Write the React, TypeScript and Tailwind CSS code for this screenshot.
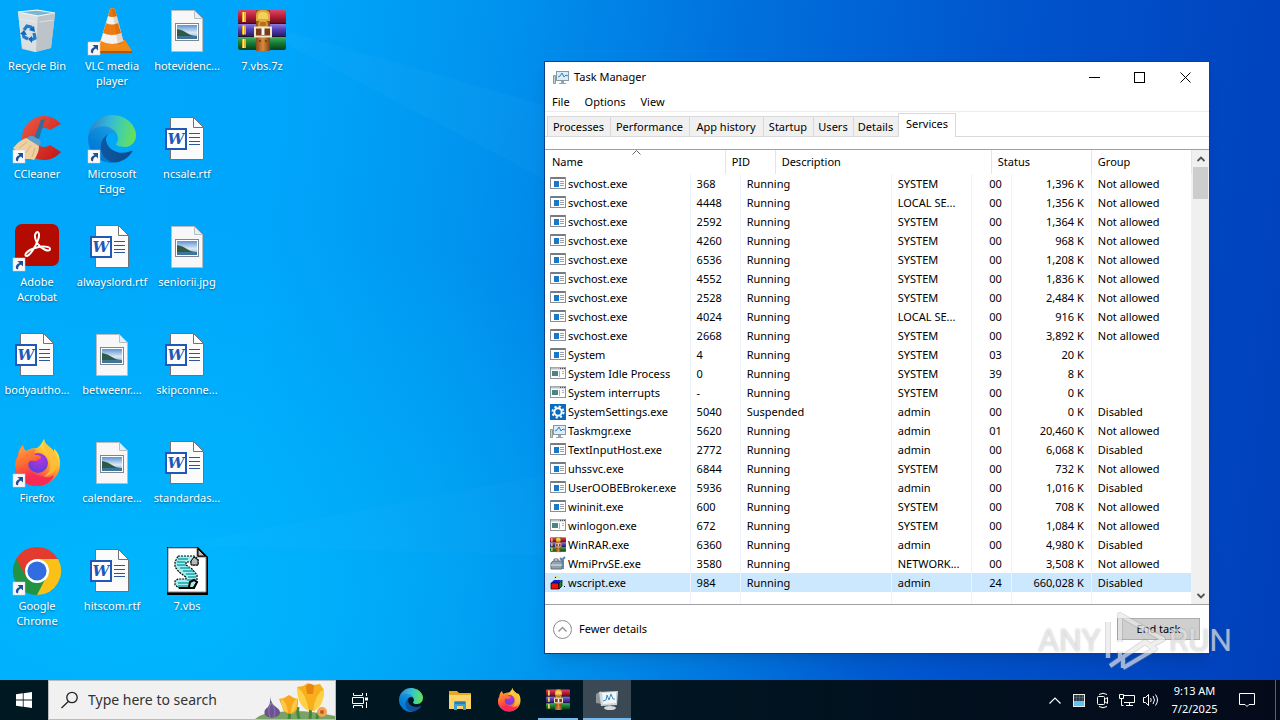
import React from 'react';

type Kind = 'bin' | 'vlc' | 'image' | 'rar' | 'ccleaner' | 'edge' | 'word' | 'acrobat' | 'firefox' | 'chrome' | 'vbs';

const shortcuts: { name: string; icon: Kind; link?: boolean; cell: string }[] = [
  { name: 'Recycle Bin', icon: 'bin', cell: 'col-start-1 row-start-1' },
  { name: 'CCleaner', icon: 'ccleaner', link: true, cell: 'col-start-1 row-start-2' },
  { name: 'Adobe\nAcrobat', icon: 'acrobat', link: true, cell: 'col-start-1 row-start-3' },
  { name: 'bodyautho...', icon: 'word', cell: 'col-start-1 row-start-4' },
  { name: 'Firefox', icon: 'firefox', link: true, cell: 'col-start-1 row-start-5' },
  { name: 'Google\nChrome', icon: 'chrome', link: true, cell: 'col-start-1 row-start-6' },
  { name: 'VLC media\nplayer', icon: 'vlc', link: true, cell: 'col-start-2 row-start-1' },
  { name: 'Microsoft\nEdge', icon: 'edge', link: true, cell: 'col-start-2 row-start-2' },
  { name: 'alwayslord.rtf', icon: 'word', cell: 'col-start-2 row-start-3' },
  { name: 'betweenr....', icon: 'image', cell: 'col-start-2 row-start-4' },
  { name: 'calendare...', icon: 'image', cell: 'col-start-2 row-start-5' },
  { name: 'hitscom.rtf', icon: 'word', cell: 'col-start-2 row-start-6' },
  { name: 'hotevidenc...', icon: 'image', cell: 'col-start-3 row-start-1' },
  { name: 'ncsale.rtf', icon: 'word', cell: 'col-start-3 row-start-2' },
  { name: 'seniorii.jpg', icon: 'image', cell: 'col-start-3 row-start-3' },
  { name: 'skipconne...', icon: 'word', cell: 'col-start-3 row-start-4' },
  { name: 'standardas...', icon: 'word', cell: 'col-start-3 row-start-5' },
  { name: '7.vbs', icon: 'vbs', cell: 'col-start-3 row-start-6' },
  { name: '7.vbs.7z', icon: 'rar', cell: 'col-start-4 row-start-1' },
];

const tabs = [
  { name: 'Processes', width: 'w-[63px]' },
  { name: 'Performance', width: 'w-[79px]' },
  { name: 'App history', width: 'w-[74px]' },
  { name: 'Startup', width: 'w-[50px]' },
  { name: 'Users', width: 'w-[40px]' },
  { name: 'Details', width: 'w-[45px]' },
];

// icon, name, pid, state, user, cpu, memory, virtualization
const rows = [
  ['exe', 'svchost.exe', '368', 'Running', 'SYSTEM', '00', '1,396 K', 'Not allowed'],
  ['exe', 'svchost.exe', '4448', 'Running', 'LOCAL SE...', '00', '1,356 K', 'Not allowed'],
  ['exe', 'svchost.exe', '2592', 'Running', 'SYSTEM', '00', '1,364 K', 'Not allowed'],
  ['exe', 'svchost.exe', '4260', 'Running', 'SYSTEM', '00', '968 K', 'Not allowed'],
  ['exe', 'svchost.exe', '6536', 'Running', 'SYSTEM', '00', '1,208 K', 'Not allowed'],
  ['exe', 'svchost.exe', '4552', 'Running', 'SYSTEM', '00', '1,836 K', 'Not allowed'],
  ['exe', 'svchost.exe', '2528', 'Running', 'SYSTEM', '00', '2,484 K', 'Not allowed'],
  ['exe', 'svchost.exe', '4024', 'Running', 'LOCAL SE...', '00', '916 K', 'Not allowed'],
  ['exe', 'svchost.exe', '2668', 'Running', 'SYSTEM', '00', '3,892 K', 'Not allowed'],
  ['exe', 'System', '4', 'Running', 'SYSTEM', '03', '20 K', ''],
  ['sys', 'System Idle Process', '0', 'Running', 'SYSTEM', '39', '8 K', ''],
  ['sys', 'System interrupts', '-', 'Running', 'SYSTEM', '00', '0 K', ''],
  ['gear', 'SystemSettings.exe', '5040', 'Suspended', 'admin', '00', '0 K', 'Disabled'],
  ['taskmgr', 'Taskmgr.exe', '5620', 'Running', 'admin', '01', '20,460 K', 'Not allowed'],
  ['exe', 'TextInputHost.exe', '2772', 'Running', 'admin', '00', '6,068 K', 'Disabled'],
  ['exe', 'uhssvc.exe', '6844', 'Running', 'SYSTEM', '00', '732 K', 'Not allowed'],
  ['exe', 'UserOOBEBroker.exe', '5936', 'Running', 'admin', '00', '1,016 K', 'Disabled'],
  ['exe', 'wininit.exe', '600', 'Running', 'SYSTEM', '00', '708 K', 'Not allowed'],
  ['sys', 'winlogon.exe', '672', 'Running', 'SYSTEM', '00', '1,084 K', 'Not allowed'],
  ['rar', 'WinRAR.exe', '6360', 'Running', 'admin', '00', '4,980 K', 'Disabled'],
  ['wmi', 'WmiPrvSE.exe', '3580', 'Running', 'NETWORK...', '00', '3,508 K', 'Not allowed'],
  ['wscript', 'wscript.exe', '984', 'Running', 'admin', '24', '660,028 K', 'Disabled'],
];

const EdgeArt = () => (
  <g transform="scale(0.1875) translate(-4.63 -4.92)">
    <defs>
      <linearGradient id="edge-a" x1="63" y1="177" x2="241" y2="177" gradientUnits="userSpaceOnUse">
        <stop offset="0" stopColor="#0c59a4" />
        <stop offset="1" stopColor="#114a8b" />
      </linearGradient>
      <linearGradient id="edge-b" x1="157" y1="95" x2="46" y2="227" gradientUnits="userSpaceOnUse">
        <stop offset="0" stopColor="#1b9de2" />
        <stop offset="0.16" stopColor="#1595df" />
        <stop offset="0.67" stopColor="#0680d7" />
        <stop offset="1" stopColor="#0078d4" />
      </linearGradient>
      <linearGradient id="edge-c" x1="20" y1="70" x2="250" y2="120" gradientUnits="userSpaceOnUse">
        <stop offset="0" stopColor="#2f86c8" />
        <stop offset="0.35" stopColor="#36b4d8" />
        <stop offset="0.65" stopColor="#42d0a8" />
        <stop offset="1" stopColor="#66e05a" />
      </linearGradient>
    </defs>
    <path fill="url(#edge-a)" d="M235.68 195.46a93.73 93.73 0 01-10.54 4.71 101.87 101.87 0 01-35.9 6.46c-47.32 0-88.54-32.55-88.54-74.32A31.48 31.48 0 01117.13 104.53c-42.8 1.8-53.8 46.4-53.8 72.53 0 73.88 68.09 81.37 82.76 81.37 7.91 0 19.84-2.3 27-4.56l1.31-.44A128.34 128.34 0 00241 201.1a4 4 0 00-5.32-5.64z" />
    <path fill="url(#edge-b)" d="M110.34 246.34A79.2 79.2 0 0187.6 225a80.72 80.72 0 0129.53-120.47c3.12-1.47 8.45-4.13 15.54-4a32.35 32.35 0 0125.69 13 31.88 31.88 0 016.36 18.66c0-.21 24.46-79.6-80-79.6-43.9 0-80 41.66-80 78.21a130.15 130.15 0 0012.11 56 128 128 0 00156.38 67.11 75.55 75.55 0 01-62.78-8z" />
    <path fill="url(#edge-c)" d="M156.94 153.78c-.81 1.05-3.3 2.5-3.3 5.66 0 2.61 1.7 5.12 4.72 7.23 14.38 10 41.49 8.68 41.56 8.68a59.56 59.56 0 0030.27-8.35A61.38 61.38 0 00260.63 114.09c.26-22.41-8-37.31-11.34-43.91C228.09 28.75 182.35 4.92 132.63 4.92a128 128 0 00-128 126.2c.48-36.54 36.8-66.05 80-66.05 3.5 0 23.46.34 42 10.07 16.34 8.58 24.9 18.94 30.85 29.21 6.18 10.67 7.28 24.15 7.28 29.52s-2.74 13.33-7.82 19.91z" />
  </g>
);

const FirefoxArt = () => (
  <g>
    <defs>
      <linearGradient id="ff-a" x1="40" y1="6" x2="10" y2="42" gradientUnits="userSpaceOnUse">
        <stop offset="0" stopColor="#fff44f" />
        <stop offset="0.3" stopColor="#ffb62e" />
        <stop offset="0.55" stopColor="#ff7139" />
        <stop offset="0.8" stopColor="#f5345f" />
        <stop offset="1" stopColor="#e31587" />
      </linearGradient>
      <radialGradient id="ff-b" cx="26" cy="20" r="12" gradientUnits="userSpaceOnUse">
        <stop offset="0" stopColor="#b833e1" />
        <stop offset="1" stopColor="#6a3fd9" />
      </radialGradient>
      <linearGradient id="ff-c" x1="8" y1="10" x2="20" y2="36" gradientUnits="userSpaceOnUse">
        <stop offset="0" stopColor="#ff9640" />
        <stop offset="0.5" stopColor="#ff6a30" />
        <stop offset="1" stopColor="#f72c55" />
      </linearGradient>
    </defs>
    <path fill="url(#ff-a)" d="M31 0c-2 4-4 7-7 9-5 0-8 1-11 3-2-1-3-3-3-6-3 3-5 7-5 11-2 3-3 6-3 9 0 12 10 21 22 21s23-9 23-22c0-7-2-12-6-15l0 3c-2-5-9-6-10-13z" />
    <circle cx="25" cy="24" r="10" fill="url(#ff-b)" />
    <path fill="url(#ff-c)" d="M10 6c-3 3-5 7-5 11-2 3-3 6-3 9 0 12 10 21 22 21 9 0 15-5 17-11-4 3-8 3-12 1-3 0-6-1-9-3-3-2-5-5-5-8 0-2 1-3 2-4 2-1 5 1 8-1 3-2 3-2 3-3-1-2-5-2-6-2-1-1-1-3 1-6-4 0-7 1-10 2-2-2-3-4-3-7z" />
    <path fill="#ffbd3a" d="M31 0c-3 7 3 11 5 18 3 8 1 16-5 20 9-2 13-8 14-14 0-5-1-9-4-13v3c-2-5-9-7-10-14z" opacity="0.85" />
  </g>
);

const RarArt = () => (
  <g>
    <defs>
      <linearGradient id="rar-r" x1="0" y1="0" x2="0" y2="1">
        <stop offset="0" stopColor="#d8486a" />
        <stop offset="0.4" stopColor="#c0223c" />
        <stop offset="1" stopColor="#5c0c1c" />
      </linearGradient>
      <linearGradient id="rar-b" x1="0" y1="0" x2="0" y2="1">
        <stop offset="0" stopColor="#8e7ce0" />
        <stop offset="0.4" stopColor="#5440b8" />
        <stop offset="1" stopColor="#22195c" />
      </linearGradient>
      <linearGradient id="rar-g" x1="0" y1="0" x2="0" y2="1">
        <stop offset="0" stopColor="#4cae5c" />
        <stop offset="0.4" stopColor="#17853a" />
        <stop offset="1" stopColor="#073d18" />
      </linearGradient>
      <linearGradient id="rar-s" x1="0" y1="0" x2="1" y2="0">
        <stop offset="0" stopColor="#8a4a1c" />
        <stop offset="0.5" stopColor="#d98a3c" />
        <stop offset="1" stopColor="#7d4016" />
      </linearGradient>
    </defs>
    <rect x="0" y="3" width="48" height="14" rx="2" fill="url(#rar-r)" />
    <rect x="0" y="17" width="48" height="13" rx="2" fill="url(#rar-b)" />
    <rect x="0" y="30" width="48" height="13" rx="2" fill="url(#rar-g)" />
    <path d="M0 16.500h48M0 29.500h48" stroke="#1c1430" />
    <path d="M4 5h4v10h-4zM4 18.500h4v9h-4zM4 32h4v9h-4z" fill="#e8b030" />
    <path d="M5 5h1v10h-1zM5 18.500h1v9h-1zM5 32h1v9h-1z" fill="#fff0a0" />
    <rect x="18" y="3" width="14" height="41" fill="url(#rar-s)" />
    <path d="M18 14v-6q0-5 7-5t7 5v6z" fill="#e0a63a" />
    <path d="M20 12v-3q0-4 5-4t5 4v3z" fill="#f3cf5c" />
    <path d="M21 20v-4q0-2 4-2t4 2v4z" fill="#b87020" stroke="#f0c040" />
    <path d="M17 20.500h16v9H17z" fill="#7a3c18" stroke="#f1e4c8" strokeWidth="2" />
    <path d="M25 21v7" stroke="#f7f7f7" strokeWidth="3" />
    <path d="M21 33h2v2h-2zM27 33h2v2h-2z" fill="#7a4018" />
  </g>
);

function DesktopArt({ kind }: { kind: Kind }) {
  switch (kind) {
    case 'edge':
      return <EdgeArt />;
    case 'firefox':
      return <FirefoxArt />;
    case 'rar':
      return <RarArt />;
    case 'bin':
      return (
        <g>
          <path d="M5 5l22-2 15 4-4 34-16 4-13-3z" fill="#cdd3d7" />
          <path d="M5 5l20 3-2 37-14-4z" fill="#dadfe2" />
          <path d="M25 8l17-2-4 35-15 4z" fill="#bcc4ca" />
          <path d="M5 5l19-2 18 3-17 3z" fill="#7fb6cf" stroke="#f4f8fa" strokeWidth="1.200" />
          <path d="M7 12l17 3M26 15l15-2" stroke="#eff2f3" opacity="0.600" />
          <g fill="none" stroke="#1b7ed0" strokeWidth="3.200">
            <path d="M11 23l3-4 4 1 1 3" />
            <path d="M21 26l1 5-4 2" />
            <path d="M15 32l-4-2-1-4" />
          </g>
          <path d="M21 19l1 6-6-2zM19 29v7l-4-4zM7 27l4-4 3 5z" fill="#1268b8" />
        </g>
      );
    case 'vlc':
      return (
        <g>
          <path d="M12 33h25l7 11v2H8v-2z" fill="#f08a12" />
          <path d="M8 44h36v2H8z" fill="#b85400" />
          <path d="M22 2q2-2 5 0l9 34q-11 7-24 0z" fill="#f2f2f2" />
          <path d="M22 2q2-2 5 0l2 7q-5 2-9 0z" fill="#e8760e" />
          <path d="M18 16q6 3 12 0l3 10q-9 4-18 0z" fill="#ed7a10" />
          <path d="M13 34q11 6 23 0l1 3q-12 8-25 0z" fill="#f58b1e" />
          <path d="M24 2q1-1 3 0l9 34q-3 2-6 2z" fill="#9a4a00" opacity="0.180" />
        </g>
      );
    case 'image':
      return (
        <g>
          <defs>
            <linearGradient id="img-sky" x1="0" y1="0" x2="0" y2="1">
              <stop offset="0" stopColor="#5b93d8" />
              <stop offset="0.55" stopColor="#dbe9f4" />
              <stop offset="1" stopColor="#7fa9c4" />
            </linearGradient>
          </defs>
          <path d="M8.500 3.500h23l8 8v33h-31z" fill="#f7f7f7" stroke="#b9bcc0" />
          <path d="M31.500 3.500v8h8z" fill="#dff0fa" stroke="#b9bcc0" />
          <rect x="12.500" y="16.500" width="23" height="17" fill="#fff" stroke="#7d8791" />
          <rect x="14" y="18" width="20" height="14" fill="url(#img-sky)" />
          <path d="M14 22q6 1 10 4t10 3v1H14z" fill="#2f5b46" />
          <path d="M14 29h20v3H14z" fill="#3f7598" />
        </g>
      );
    case 'ccleaner':
      return (
        <g>
          <defs>
            <linearGradient id="cc-r" x1="0" y1="0" x2="1" y2="1">
              <stop offset="0" stopColor="#ee5a44" />
              <stop offset="1" stopColor="#c41616" />
            </linearGradient>
          </defs>
          <path d="M48 9A22 22 0 1 0 48 37L37 30A9.500 9.500 0 1 1 37 15z" fill="url(#cc-r)" />
          <path d="M28 5l4-1-6 20-5-1z" fill="#2d6e9f" />
          <path d="M13 24q3-4 7-3l7 4q2 3-1 6z" fill="#5a9fce" />
          <path d="M0 33q7-8 13-10l13 8q0 7-5 14l-4-1-4 0z" fill="#efd0a0" />
          <path d="M6 33l8-6M13 38l5-8M19 42l3-9" stroke="#d9b27c" />
        </g>
      );
    case 'word':
      return (
        <g>
          <path d="M7.500 2.500h23l10 10v32h-33z" fill="#fbfbfb" stroke="#6f7276" />
          <path d="M30.500 2.500v10h10z" fill="#fff" stroke="#6f7276" />
          <path d="M26 18.500h11M26 22.500h11M26 26.500h11M26 29.500h11" stroke="#2b579a" />
          <rect x="3" y="14" width="20" height="20" fill="#fff" stroke="#1f58b6" strokeWidth="2" />
          <text x="13" y="29" textAnchor="middle" fontFamily="DejaVu Serif, serif" fontStyle="italic" fontWeight="700" fontSize="15" fill="#1f58b6">W</text>
        </g>
      );
    case 'acrobat':
      return (
        <g>
          <rect x="2" y="1" width="44" height="42" rx="7" fill="#b30b00" />
          <path d="M23 10c3-3 4 2 2 7-3 8-8 15-11 16-4 0 0-6 8-8 7-2 15-2 15 1 0 4-9 0-13-6-2-4-3-8-1-10z" fill="none" stroke="#fff" strokeWidth="2" />
        </g>
      );
    case 'chrome':
      return (
        <g>
          <path d="M24 24L3.200 12A24 24 0 0 1 44.800 12z" fill="#e33b2e" />
          <path d="M24 24L44.800 12A24 24 0 0 1 24 48z" fill="#fbc116" />
          <path d="M24 24L24 48A24 24 0 0 1 3.200 12z" fill="#229342" />
          <path d="M24 12h20.800q2 4 2.900 8L32 24z" fill="#fbc116" />
          <path d="M24 12h20.800L40 8 24 6z" fill="#e33b2e" />
          <path d="M33.500 29.500L24 48l-6-1 3-14z" fill="#229342" />
          <path d="M3.200 12l10.400 18 6-10-8-14z" fill="#229342" />
          <path d="M3.200 12l10.400 18 4-14-6-12z" fill="#e33b2e" />
          <circle cx="24" cy="24" r="12" fill="#fff" />
          <circle cx="24" cy="24" r="9.600" fill="#2f6de0" />
        </g>
      );
    case 'vbs':
      return (
        <g>
          <path d="M4 0h31l10 10v38H4z" fill="#000" />
          <path d="M5 1h29v9h9v35H5z" fill="#fff" />
          <path d="M5 1h29v9h9v35H5z" fill="none" stroke="#8a8a8a" />
          <path d="M35 2v7h7z" fill="#c0c0c0" stroke="#000" />
          <path d="M15 9h16l4 3v6h-6v-3h-6v3l6 4 5 6v7l-4 6H16l-4-3v-4l3-2h8v-2l-7-5-4-5v-5z" fill="#a8ecec" stroke="#000" strokeWidth="1.200" strokeDasharray="2 1" />
          <path d="M15 12h10M14 15h8M14 18h9M17 21h10M20 24h10M23 27h9M25 30h8M24 33h9M15 36h12M15 39h12" stroke="#12a5ac" strokeWidth="1.300" />
          <path d="M28 14l3-4 4 3v5h-7z" fill="#b8b8b8" stroke="#000" />
          <path d="M26 40l1-5 4-2 3 2-3 6H16" fill="none" stroke="#000" strokeWidth="2" />
        </g>
      );
  }
}

const DesktopIcon = ({ kind, link }: { kind: Kind; link?: boolean }) => (
  <svg viewBox="0 0 48 48" className="h-12 w-12 overflow-visible">
    <DesktopArt kind={kind} />
    {link && (
      <g>
        <rect x="0" y="35" width="12" height="13" fill="#f8f8f8" stroke="#c9cdd2" strokeWidth="0.500" />
        <path d="M4.500 38h5.500v5.500l-2-2q-3 1-3 5l-2-1q-1-4 3.500-5.500z" fill="#1f4f96" />
      </g>
    )}
  </svg>
);

const MonitorArt = () => (
  <g>
    <path d="M.5 6.500h2v8h-2z" fill="#c9d3cc" stroke="#8c9a92" />
    <rect x="3.500" y="2.500" width="12" height="9" fill="#dcecf6" stroke="#8797a3" />
    <path d="M5 8l2-1 2-3 2 4 2-2 2 1" fill="none" stroke="#2f83b8" />
    <path d="M8 12h3v2h2v1H6v-1h2z" fill="#9aa5ad" />
  </g>
);

function ProcessIcon({ kind }: { kind: string }) {
  return (
    <svg viewBox="0 0 16 16" className="h-4 w-4 shrink-0">
      {kind === 'exe' && (
        <g>
          <rect x="0.500" y="1.500" width="15" height="11" fill="#fff" stroke="#8a8f94" />
          <path d="M1 2h14" stroke="#777c82" strokeWidth="2" />
          <rect x="4" y="5" width="5" height="6" fill="#1a78c8" />
          <path d="M10 5.500h4M10 7.500h4M10 9.500h4" stroke="#9aa2a8" />
        </g>
      )}
      {kind === 'sys' && (
        <g>
          <rect x="0.500" y="1.500" width="15" height="11" fill="#fff" stroke="#90959a" />
          <path d="M1 2.500h14" stroke="#b9bec2" strokeWidth="2" />
          <path d="M10 2.500h1M12 2.500h1M14 2.500h1" stroke="#4a4f55" />
          <rect x="2" y="5" width="6" height="5" fill="#4b8484" />
          <path d="M9.500 5v6M12 5.500h2M12 7.500h2" stroke="#a9b2b4" />
        </g>
      )}
      {kind === 'gear' && (
        <g>
          <rect width="16" height="16" fill="#0b6cbf" />
          <circle cx="8" cy="8" r="5.500" fill="none" stroke="#fff" strokeWidth="2" strokeDasharray="2.160 2.160" />
          <circle cx="8" cy="8" r="3.700" fill="none" stroke="#fff" strokeWidth="2" />
        </g>
      )}
      {kind === 'taskmgr' && <MonitorArt />}
      {kind === 'rar' && (
        <g transform="scale(0.333 0.36) translate(0 -2)">
          <RarArt />
        </g>
      )}
      {kind === 'wmi' && (
        <g>
          <path d="M1 7l2-2h9v8H1z" fill="#8fa0ae" stroke="#5f707e" />
          <path d="M4 5V3h4v2" fill="none" stroke="#5f707e" />
          <path d="M1 9h11" stroke="#e4ebf0" />
          <path d="M10 2l2 2 3-3M13 4v9" fill="none" stroke="#5c86a8" strokeWidth="2" />
        </g>
      )}
      {kind === 'wscript' && (
        <g>
          <path d="M1 8l3-3h7l-2 3z" fill="#1020d0" />
          <path d="M1 8h8v6H1z" fill="#f01010" stroke="#000" strokeWidth="0.700" />
          <path d="M9 8l3-3v6l-3 3z" fill="#208030" stroke="#000" strokeWidth="0.700" />
          <path d="M4 2l3-1 3 2" stroke="#e8e060" fill="none" />
          <path d="M5 2h1v1H5zM14 11h1v1h-1z" fill="#000" />
        </g>
      )}
    </svg>
  );
}

const TaskManager = () => (
  <section className="absolute left-[544px] top-[61px] w-[666px] border border-[#0c3f8c] bg-white text-[11px] leading-4 text-black shadow-lg">
    <header className="flex h-[30px] items-center pl-2">
      <svg viewBox="0 0 16 16" className="h-4 w-4">
        <MonitorArt />
      </svg>
      <h1 className="ml-[5px] flex-1">Task Manager</h1>
      <button aria-label="Minimize" className="grid h-7 w-[45px] place-items-center">
        <svg viewBox="0 0 11 11" className="h-[11px] w-[11px]"><path d="M0 5.500h11" stroke="#000" /></svg>
      </button>
      <button aria-label="Maximize" className="grid h-7 w-[45px] place-items-center">
        <svg viewBox="0 0 11 11" className="h-[11px] w-[11px]"><rect x="0.500" y="0.500" width="10" height="10" fill="none" stroke="#000" /></svg>
      </button>
      <button aria-label="Close" className="grid h-7 w-[47px] place-items-center">
        <svg viewBox="0 0 11 11" className="h-[11px] w-[11px]"><path d="M.5 .5l10 10M10.500 .5l-10 10" stroke="#000" /></svg>
      </button>
    </header>

    <nav className="flex h-5 items-center gap-[15px] border-b border-[#ececec] pl-[7px]">
      <button>File</button>
      <button>Options</button>
      <button>View</button>
    </nav>

    <div className="flex h-[25px] items-end border-b border-[#d9d9d9] pl-[2px]">
      {tabs.map((tab) => (
        <button key={tab.name} className={`h-5 border-l border-t border-[#d9d9d9] bg-[#f0f0f0] pr-px whitespace-nowrap ${tab.width}`}>
          {tab.name}
        </button>
      ))}
      <button className="-mb-px h-6 w-[58px] border border-b-0 border-[#d9d9d9] bg-white pb-1">Services</button>
    </div>

    <div className="mt-3 flex border-y border-[#a0a0a0]">
      <table className="flex-1 table-fixed border-collapse">
        <colgroup>
          <col className="w-[145px]" />
          <col className="w-[35px]" />
          <col className="w-[15px]" />
          <col className="w-[35px]" />
          <col className="w-[116px]" />
          <col className="w-[80px]" />
          <col className="w-[20px]" />
          <col className="w-[20px]" />
          <col className="w-[80px]" />
          <col className="w-[100px]" />
        </colgroup>
        <thead>
          <tr className="h-6 text-left *:border-r *:border-[#e5e5e5] *:p-0 *:font-normal *:first:pl-[7px] *:not-first:pl-1.5">
            <th colSpan={2} className="relative">
              Name
              <svg viewBox="0 0 9 5" className="absolute left-[87px] top-0 h-[5px] w-[9px]"><path d="M.5 4.500l4-4 4 4" fill="none" stroke="#666" /></svg>
            </th>
            <th colSpan={2}>PID</th>
            <th colSpan={3}>Description</th>
            <th colSpan={2}>Status</th>
            <th>Group</th>
          </tr>
        </thead>
        <tbody>
          {rows.map(([icon, name, pid, state, user, cpu, memory, virt]) => (
            <tr
              key={pid}
              className={`h-[19px] whitespace-nowrap *:border-r *:border-[#edf3fa] *:p-0 *:first:pl-[7px] *:not-first:pl-1.5 ${pid === '984' ? 'bg-[#cce8ff]' : ''}`}
            >
              <td>
                <div className="-ml-[2px] flex items-center gap-[2px]">
                  <ProcessIcon kind={icon} />
                  {name}
                </div>
              </td>
              <td colSpan={2}>{pid}</td>
              <td colSpan={2}>{state}</td>
              <td>{user}</td>
              <td colSpan={2}><div className="pr-[9px] text-right">{cpu}</div></td>
              <td><div className="pr-[7px] text-right">{memory}</div></td>
              <td>{virt}</td>
            </tr>
          ))}
          <tr className="h-3 *:border-r *:border-[#edf3fa] *:p-0">
            <td />
            <td colSpan={2} />
            <td colSpan={2} />
            <td />
            <td colSpan={2} />
            <td />
            <td />
          </tr>
        </tbody>
      </table>
      <div className="flex w-[17px] flex-col items-center bg-[#f0f0f0]">
        <button aria-label="Scroll up" className="grid h-[17px] place-items-center">
          <svg viewBox="0 0 8 6" className="h-[6px] w-2"><path d="M.5 5l3.500-3.500L7.500 5" fill="none" stroke="#505050" strokeWidth="1.800" /></svg>
        </button>
        <div className="h-8 w-[15px] bg-[#cdcdcd]" />
        <button aria-label="Scroll down" className="mt-auto grid h-[17px] place-items-center">
          <svg viewBox="0 0 8 6" className="h-[6px] w-2"><path d="M.5 1l3.500 3.500L7.500 1" fill="none" stroke="#505050" strokeWidth="1.800" /></svg>
        </button>
      </div>
    </div>

    <footer className="flex h-12 items-center justify-between pl-2 pr-[9px]">
      <button className="flex items-center gap-[7px]">
        <svg viewBox="0 0 19 19" className="h-[19px] w-[19px]" fill="none">
          <circle cx="9.500" cy="9.500" r="9" stroke="#8a8a8a" />
          <path d="M5.500 11.500l4-4 4 4" stroke="#999" strokeWidth="1.500" />
        </svg>
        Fewer details
      </button>
      <button className="h-[22px] w-[83px] border border-[#adadad] bg-[#cfcfcf]">End task</button>
    </footer>
  </section>
);

const Watermark = () => (
  <div className="pointer-events-none absolute bottom-2 right-[48px] flex h-16 items-center font-['Roboto',sans-serif] text-[32px] leading-none text-white/60 [text-shadow:0_0_2px_rgba(90,90,90,0.45)]">
    <span>ANY</span>
    <svg viewBox="0 0 68 64" className="h-16 w-[68px]" fill="none">
      {/* grey pass gives the white bands an edge on the window */}
      <path d="M7 50V14M19 34V7L62 31 47 39M9 58L19 51V43M22 60L54 41 44 34 22 49V60" stroke="#8c8c8c" strokeOpacity="0.3" strokeWidth="6" strokeLinejoin="round" />
      <path d="M7 50V14M19 34V7L62 31 47 39M9 58L19 51V43M22 60L54 41 44 34 22 49V60" stroke="#fff" strokeOpacity="0.55" strokeWidth="4" strokeLinejoin="round" />
    </svg>
    <span>RUN</span>
  </div>
);

const Flowers = () => (
  <svg viewBox="0 0 80 38" className="h-[38px] w-20 shrink-0">
    <path d="M0 38q8-7 24-7 24-3 56 4v3z" fill="#7ba266" />
    <path d="M34 38q1-5 0-9M55 38q1-6 0-12M44 38q-2-7-1-12M62 38q0-5 3-8" stroke="#3f8a3a" strokeWidth="3" fill="none" />
    <path d="M15 15q1 8 6 11 7 5 2 9-8 4-13-1-2-5 3-8 3-4 2-11z" fill="#6b5290" />
    <path d="M16 22q-4 8-1 14M16 22q6 7 3 14" stroke="#8e74b4" fill="none" />
    <path d="M24 18l5-1 5-3 5 3 4 1q1 12-6 15-9 0-10-8z" fill="#f8a81c" />
    <path d="M26 17q6 4 7 15-7-3-7-15zM42 17q-6 5-6 15 7-3 6-15z" fill="#fccb42" />
    <path d="M42 6l6-1 5-3 6 2 6-1 4 6q0 15-10 21-11-2-13-11z" fill="#f9ae1c" />
    <path d="M42 6q9 6 12 24-12-5-12-24zM69 8q-9 5-11 22 11-4 11-22z" fill="#fcd148" />
    <path d="M51 5q4-4 8 0l-1 8h-6z" fill="#e88410" />
    <circle cx="67" cy="31" r="5" fill="#f2a250" />
    <circle cx="67" cy="31" r="2" fill="#c4581c" />
  </svg>
);

const TaskbarButton = ({ label, active, running, children }: { label: string; active?: boolean; running?: boolean; children: React.ReactNode }) => (
  <button
    aria-label={label}
    className={`relative grid h-10 w-12 place-items-center ${active ? 'bg-[#3b4954]' : ''}`}
  >
    {children}
    {(active || running) && <span className={`absolute bottom-0 h-0.5 bg-[#76b9ed] ${active ? 'inset-x-0' : 'inset-x-1'}`} />}
  </button>
);

const Taskbar = () => (
  <footer className="flex h-10 items-center bg-linear-to-r from-[#001821] via-[#001622] to-[#040a1a] text-white">
    <TaskbarButton label="Start">
      <svg viewBox="0 0 16 16" className="h-4 w-4" fill="#fff"><path d="M0 2.300l6.800-1v6.200H0zM7.600 1.200L16 0v7.500H7.600zM0 8.400h6.800v6.300l-6.800-1zM7.600 8.400H16V16l-8.400-1.200z" /></svg>
    </TaskbarButton>
    <label className="flex h-10 w-72 items-center border border-[#b8bcc0] bg-[#f1f1f1] pl-3 text-[#333]">
      <svg viewBox="0 0 18 18" className="h-[18px] w-[18px] shrink-0" fill="none" stroke="#222" strokeWidth="1.300">
        <circle cx="11" cy="6.500" r="5.200" />
        <path d="M7.300 10.500L.5 17" />
      </svg>
      <input aria-label="Search" placeholder="Type here to search" className="ml-[9px] min-w-0 flex-1 bg-transparent text-[14px] leading-5 outline-none placeholder:text-[#333]" />
      <Flowers />
    </label>
    <TaskbarButton label="Task View">
      <svg viewBox="0 0 17 17" className="h-[17px] w-[17px]" fill="none" stroke="#fff">
        <path d="M1.500 1v2.500h9V1M1.500 16v-2.500h9V16M.5 5.500h11v6H.5zM14.500 1v3M14.500 10v6" />
        <path d="M13 5.500h3v3h-3z" fill="#fff" stroke="none" />
      </svg>
    </TaskbarButton>
    <div className="ml-[3px] flex gap-px">
      <TaskbarButton label="Microsoft Edge">
        <svg viewBox="0 0 48 48" className="h-6 w-6"><EdgeArt /></svg>
      </TaskbarButton>
      <TaskbarButton label="File Explorer">
        <svg viewBox="0 0 24 24" className="h-6 w-6">
          <path d="M1 3h8l2 2h12v5H1z" fill="#e8a821" />
          <path d="M1 7h22v14H1z" fill="#fbd667" />
          <path d="M6 22v-8q0-1 1-1h10q1 0 1 1v8h-3v-4H9v4z" fill="#3f9fdc" />
          <path d="M7 14h10v2H7z" fill="#2b7cb8" />
        </svg>
      </TaskbarButton>
      <TaskbarButton label="Firefox">
        <svg viewBox="0 0 48 48" className="h-6 w-6"><FirefoxArt /></svg>
      </TaskbarButton>
      <TaskbarButton label="WinRAR" running>
        <svg viewBox="0 0 48 48" className="h-6 w-6"><RarArt /></svg>
      </TaskbarButton>
      <TaskbarButton label="Task Manager" active>
        <svg viewBox="0 0 24 24" className="h-6 w-6">
          <path d="M1 6l5-3 2 13-7-1z" fill="#8b969d" />
          <path d="M4 4l19-1-1 14-16 1z" fill="#cfd6da" />
          <path d="M7 5l14-1v11l-13 1z" fill="#f0f6f9" />
          <path d="M8 13l3-1 1-5 2 5 2-6 2 5h2" fill="none" stroke="#3a8cc0" />
          <path d="M13 17h3v3h-3z" fill="#9aa4aa" />
          <ellipse cx="15" cy="20" rx="6" ry="2" fill="#d4dadd" />
        </svg>
      </TaskbarButton>
    </div>

    <div className="ml-auto flex h-10 items-center">
      <div className="flex items-center">
        <button aria-label="Show hidden icons" className="grid w-6 place-items-center">
          <svg viewBox="0 0 12 7" className="h-[7px] w-3"><path d="M.5 6.500L6 1l5.500 5.500" fill="none" stroke="#fff" strokeWidth="1.200" /></svg>
        </button>
        <button aria-label="System monitor" className="grid w-6 place-items-center">
          <svg viewBox="0 0 12 13" className="h-[13px] w-3">
            <rect width="12" height="13" fill="#e6ebee" />
            <path d="M1 1h10v6H1z" fill="#2c3a44" />
            <path d="M3.500 1v6M6.500 1v6M9.500 1v6M1 3.500h10" stroke="#66747e" strokeWidth="0.500" />
            <path d="M1 7h10v5H1z" fill="#5ec2f4" />
          </svg>
        </button>
        <button aria-label="Meet Now" className="grid w-6 place-items-center">
          <svg viewBox="0 0 14 17" className="h-[17px] w-[14px]" fill="none" stroke="#fff">
            <path d="M3 2.500q4-2.500 8 0M3 14.500q4 2.500 8 0" />
            <rect x="1.500" y="4.500" width="7" height="8" rx="1" />
            <path d="M8.500 7.500l3-2v6l-3-2" />
          </svg>
        </button>
        <button aria-label="Network" className="grid w-6 place-items-center">
          <svg viewBox="0 0 16 14" className="h-[14px] w-4" fill="none" stroke="#fff">
            <path d="M5 2.500h10.500v7H5M10.500 9.500v3M7 12.500h7M.5 1.500h4v4h-4zM2.500 5.500v7h2" />
          </svg>
        </button>
        <button aria-label="Volume" className="grid w-6 place-items-center">
          <svg viewBox="0 0 16 14" className="h-[14px] w-4" fill="none" stroke="#fff">
            <path d="M.5 4.500h2l3-3v11l-3-3h-2zM7.500 5q1.500 2 0 4M10 3q3 4 0 8M12.500 1.500q4 5.500 0 11" />
          </svg>
        </button>
      </div>
      <button className="w-15 pl-[3px] text-center text-[11px] leading-[18px] whitespace-nowrap">
        9:13 AM
        <br />
        7/2/2025
      </button>
      <button aria-label="Notifications" className="grid w-12 place-items-center">
        <svg viewBox="0 0 16 16" className="h-4 w-4" fill="none" stroke="#fff"><path d="M.5 1.500h15v11H10l-2 2-2-2H.5z" /></svg>
      </button>
      <button aria-label="Show desktop" className="ml-1 h-10 w-[5px] border-l border-[#5a6270]" />
    </div>
  </footer>
);

export default function App() {
  return (
    <div className="flex min-h-screen flex-col font-['Noto_Sans','Open_Sans',sans-serif]">
      <main className="relative flex-1 overflow-hidden bg-[linear-gradient(97deg,#00a8fb_0%,#00a6fb_22%,#0094ef_36%,#0070dc_55%,#0054cd_75%,#003fba_100%)]">
        {/* wallpaper glow and rays */}
        <div className="absolute inset-0 bg-[radial-gradient(ellipse_at_12%_88%,rgba(0,186,255,0.8)_0%,rgba(0,180,255,0)_45%)]" />
        <svg viewBox="0 0 1280 680" preserveAspectRatio="none" className="absolute inset-0 h-full w-full">
          <path d="M230 15L700 150V260z" fill="#5cc4ff" opacity="0.06" />
          <path d="M180 545L700 445V560z" fill="#5cc4ff" opacity="0.04" />
        </svg>

        <div className="relative grid w-max auto-cols-[75px] auto-rows-[108px]">
          {shortcuts.map((item) => (
            <button key={item.name} className={`flex w-[75px] flex-col items-center pr-px pt-[7px] ${item.cell}`}>
              <DesktopIcon kind={item.icon} link={item.link} />
              <span className="mt-[3px] whitespace-pre text-center text-[11px] leading-[15px] text-white [text-shadow:0_1px_2px_rgba(0,0,0,0.45)]">
                {item.name}
              </span>
            </button>
          ))}
        </div>

        <TaskManager />
        <Watermark />
      </main>
      <Taskbar />
    </div>
  );
}
